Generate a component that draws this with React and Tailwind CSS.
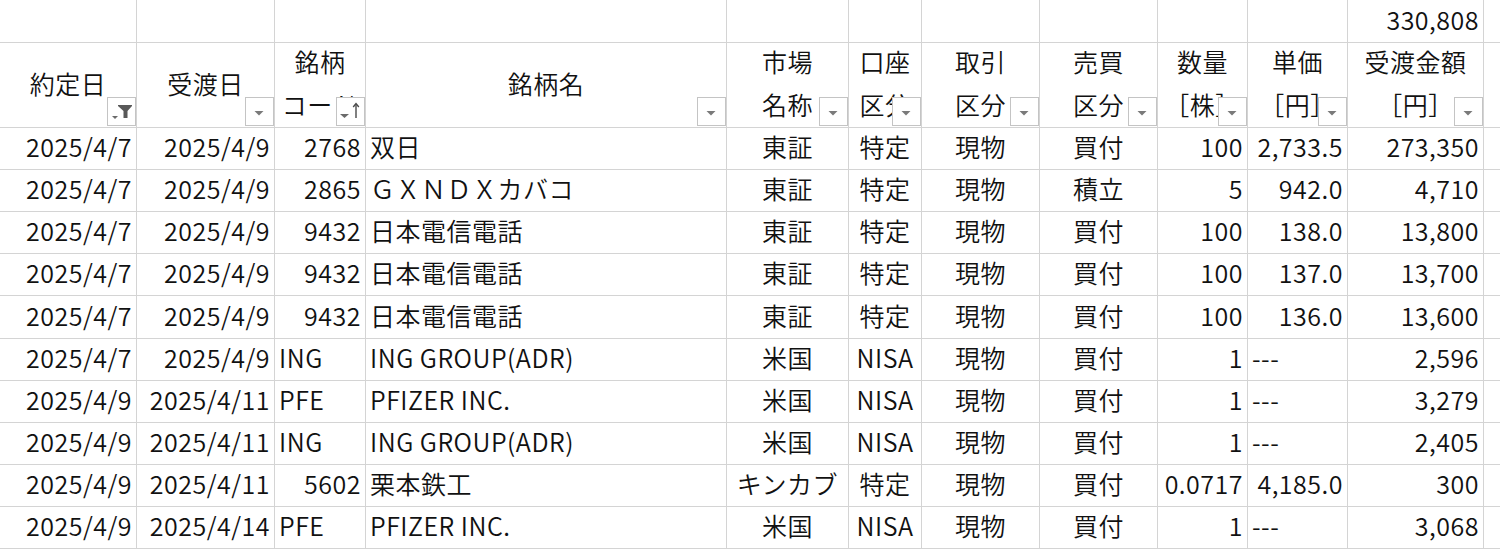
import React from "react";

const COLS =
  "grid grid-cols-[137px_138px_91px_361px_122px_73px_118px_118px_90px_100px_136px_1fr]";

const rows = [
  ["2025/4/7", "2025/4/9", "2768", "双日", "東証", "特定", "現物", "買付", "100", "2,733.5", "273,350"],
  ["2025/4/7", "2025/4/9", "2865", "ＧＸＮＤＸカバコ", "東証", "特定", "現物", "積立", "5", "942.0", "4,710"],
  ["2025/4/7", "2025/4/9", "9432", "日本電信電話", "東証", "特定", "現物", "買付", "100", "138.0", "13,800"],
  ["2025/4/7", "2025/4/9", "9432", "日本電信電話", "東証", "特定", "現物", "買付", "100", "137.0", "13,700"],
  ["2025/4/7", "2025/4/9", "9432", "日本電信電話", "東証", "特定", "現物", "買付", "100", "136.0", "13,600"],
  ["2025/4/7", "2025/4/9", "ING", "ING GROUP(ADR)", "米国", "NISA", "現物", "買付", "1", "---", "2,596"],
  ["2025/4/9", "2025/4/11", "PFE", "PFIZER INC.", "米国", "NISA", "現物", "買付", "1", "---", "3,279"],
  ["2025/4/9", "2025/4/11", "ING", "ING GROUP(ADR)", "米国", "NISA", "現物", "買付", "1", "---", "2,405"],
  ["2025/4/9", "2025/4/11", "5602", "栗本鉄工", "キンカブ", "特定", "現物", "買付", "0.0717", "4,185.0", "300"],
  ["2025/4/9", "2025/4/14", "PFE", "PFIZER INC.", "米国", "NISA", "現物", "買付", "1", "---", "3,068"],
];

const rowHeights = ["h-[42px]", "h-[42px]", "h-[42px]", "h-[42px]", "h-[43px]", "h-[42px]", "h-[42px]", "h-[42px]", "h-[42px]", "h-[42px]"];

const headers = [
  ["約定日"],
  ["受渡日"],
  ["銘柄", "コード"],
  ["銘柄名"],
  ["市場", "名称"],
  ["口座", "区分"],
  ["取引", "区分"],
  ["売買", "区分"],
  ["数量", "［株］"],
  ["単価", "［円］"],
  ["受渡金額", "［円］"],
];

const isNum = (s) => /^[0-9.,]+$/.test(s);

function alignFor(ci, v) {
  if (ci === 0 || ci === 1 || ci === 8 || ci === 10) return "justify-end";
  if (ci === 2) return isNum(v) ? "justify-end" : "justify-start";
  if (ci === 3) return "justify-start";
  if (ci === 9) return v === "---" ? "justify-start" : "justify-end";
  return "justify-center";
}

function FilterButton({ kind }) {
  return (
    <div className="absolute right-0 bottom-[1px] w-[29px] h-[29px] border border-[#c4c4c4] bg-white">
      <svg width="27" height="27" viewBox="0 0 27 27" className="block">
        {kind === "filter" && (
          <>
            <polygon points="4,18 10,18 7,21" fill="#6b6b6b" />
            <path d="M10 7 H24 V8 L19.5 13 V20 H15.5 V13 L10 8 Z" fill="#595959" />
          </>
        )}
        {kind === "sort" && (
          <>
            <polygon points="3,16 12,16 7.5,20" fill="#6b6b6b" />
            <path d="M19 6 V20" stroke="#4a4a4a" strokeWidth="1.4" />
            <path d="M16.2 9 L19 5.5 L21.8 9" stroke="#4a4a4a" strokeWidth="1.4" fill="none" />
          </>
        )}
        {kind === "drop" && <polygon points="8.5,13 17.5,13 13,17.5" fill="#7a7a7a" />}
      </svg>
    </div>
  );
}

export default function App() {
  const cellBase = "border-r border-b border-[#d4d4d4] overflow-hidden whitespace-nowrap";
  return (
    <div
      className="w-[1500px] h-[554px] bg-white text-[#111] text-[25px] font-[350] tracking-[0.5px] overflow-hidden"
      style={{ fontFamily: '"Noto Sans CJK JP", "Noto Sans", sans-serif' }}
    >
      {/* top row */}
      <div className={`${COLS} h-[43px]`}>
        {Array.from({ length: 11 }).map((_, i) => (
          <div key={i} className={`${cellBase} flex items-center justify-end px-[4px] pb-[2px]`}>
            {i === 10 ? "330,808" : ""}
          </div>
        ))}
        <div className="border-b border-[#d4d4d4]" />
      </div>

      {/* header row */}
      <div className={`${COLS} h-[85px]`}>
        {headers.map((lines, i) => (
          <div key={i} className={`${cellBase} relative flex items-center justify-center pb-[4px]`}>
            <div className="flex flex-col items-center leading-[43px]">
              {lines.map((l, j) => (
                <span key={j}>{l}</span>
              ))}
            </div>
            <FilterButton kind={i === 0 ? "filter" : i === 2 ? "sort" : "drop"} />
          </div>
        ))}
        <div className="border-b border-[#d4d4d4]" />
      </div>

      {/* data rows */}
      {rows.map((r, ri) => (
        <div key={ri} className={`${COLS} ${rowHeights[ri]}`}>
          {r.map((v, ci) => (
            <div key={ci} className={`${cellBase} flex items-center px-[4px] pb-[3px] ${alignFor(ci, v)}`}>
              {v}
            </div>
          ))}
          <div className="border-b border-[#d4d4d4]" />
        </div>
      ))}
    </div>
  );
}
